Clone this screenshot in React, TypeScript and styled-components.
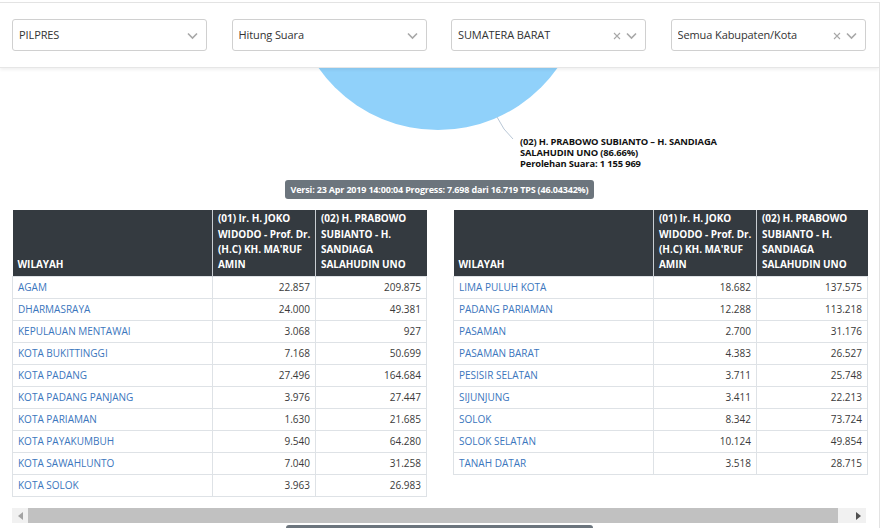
import React from 'react'
import styled, { createGlobalStyle } from 'styled-components'

const GlobalStyle = createGlobalStyle`
  html, body {
    margin: 0;
    padding: 0;
    background: #fff;
    overflow: hidden;
  }
  body {
    font-family: "Open Sans", "Noto Sans", sans-serif;
    color: #333;
  }
`

const Frame = styled.div`
  width: 880px;
  margin-top: 2px;
  border-top: 1px solid #e3e3e3;
  border-right: 1px solid #e3e3e3;
  box-sizing: border-box;
  height: 526px;
  overflow: hidden;
`

const FilterBar = styled.div`
  display: grid;
  grid-template-columns: repeat(4, 195px);
  column-gap: 24.5px;
  padding: 16px 12px 16px 12px;
  border-bottom: 1px solid #e6e6e6;
  box-shadow: 0 2px 3px rgba(0, 0, 0, 0.06);
  position: relative;
  z-index: 2;
  background: #fff;
`

const Select = styled.div`
  height: 32px;
  box-sizing: border-box;
  border: 1px solid #d0d0d0;
  border-radius: 3px;
  display: flex;
  align-items: center;
  padding: 0 8px 1px 6px;
  font-size: 11px;
  color: #333;
  letter-spacing: -0.1px;
`

const SelectText = styled.span`
  flex: 1;
  white-space: nowrap;
  overflow: hidden;
`

const SelectIcons = styled.span`
  display: flex;
  align-items: center;
  gap: 5px;
  padding-top: 2px;
`

const Chevron = () => (
  <svg width="11" height="8" viewBox="0 0 11 8">
    <path d="M1 1.5 L5.5 6 L10 1.5" fill="none" stroke="#a8a8a8" strokeWidth="1.6" />
  </svg>
)

const Cross = () => (
  <svg width="8" height="8" viewBox="0 0 8 8">
    <path d="M1 1 L7 7 M7 1 L1 7" fill="none" stroke="#a8a8a8" strokeWidth="1.1" />
  </svg>
)

const ChartArea = styled.div`
  position: relative;
  height: 112px;
`

const PieLabel = styled.div`
  position: absolute;
  left: 520px;
  top: 68px;
  font-size: 9.4px;
  font-weight: 700;
  line-height: 11px;
  color: #111;
  letter-spacing: -0.15px;
  white-space: nowrap;
`

const BadgeRow = styled.div`
  display: flex;
  justify-content: center;
  height: 30px;
`

const Badge = styled.div`
  background: #6c757d;
  color: #fff;
  border-radius: 3px;
  height: 19px;
  box-sizing: border-box;
  padding: 0 6px;
  display: flex;
  align-items: center;
  font-size: 9px;
  font-weight: 700;
  letter-spacing: -0.18px;
  white-space: nowrap;
`

const Tables = styled.div`
  display: flex;
  gap: 26px;
  padding: 0 0 0 12px;
  align-items: flex-start;
  height: 298px;
`

const Table = styled.table`
  width: 414px;
  border-collapse: collapse;
  table-layout: fixed;
  font-size: 10px;
`

const Th = styled.th`
  background: #343a40;
  color: #fff;
  font-weight: 700;
  text-align: left;
  vertical-align: bottom;
  padding: 0 2px 3px 5px;
  height: 66px;
  box-sizing: border-box;
  line-height: 15.3px;
  letter-spacing: -0.05px;
  border-left: 1px solid #c8cdd2;
  &:first-child {
    border-left: none;
  }
`

const Td = styled.td<{ $num?: boolean }>`
  height: 22px;
  box-sizing: border-box;
  padding: 0 5px;
  border: 1px solid #dee2e6;
  text-align: ${({ $num }) => ($num ? 'right' : 'left')};
  color: ${({ $num }) => ($num ? '#3a3a3a' : '#3b76bd')};
  white-space: nowrap;
  overflow: hidden;
`

const ScrollBar = styled.div`
  margin: 0 0 0 12px;
  width: 854px;
  height: 15px;
  background: #f1f1f1;
  display: flex;
  align-items: center;
`

const Arrow = styled.div`
  width: 16px;
  display: flex;
  justify-content: center;
  align-items: center;
`

const Thumb = styled.div`
  flex: 1;
  height: 15px;
  background: #c1c1c1;
  margin-right: 12px;
`

const SecondBadge = styled(Badge)`
  margin: 2px auto 0;
  width: 307px;
`

type Row = [string, string, string]

const left: Row[] = [
  ['AGAM', '22.857', '209.875'],
  ['DHARMASRAYA', '24.000', '49.381'],
  ['KEPULAUAN MENTAWAI', '3.068', '927'],
  ['KOTA BUKITTINGGI', '7.168', '50.699'],
  ['KOTA PADANG', '27.496', '164.684'],
  ['KOTA PADANG PANJANG', '3.976', '27.447'],
  ['KOTA PARIAMAN', '1.630', '21.685'],
  ['KOTA PAYAKUMBUH', '9.540', '64.280'],
  ['KOTA SAWAHLUNTO', '7.040', '31.258'],
  ['KOTA SOLOK', '3.963', '26.983'],
]

const right: Row[] = [
  ['LIMA PULUH KOTA', '18.682', '137.575'],
  ['PADANG PARIAMAN', '12.288', '113.218'],
  ['PASAMAN', '2.700', '31.176'],
  ['PASAMAN BARAT', '4.383', '26.527'],
  ['PESISIR SELATAN', '3.711', '25.748'],
  ['SIJUNJUNG', '3.411', '22.213'],
  ['SOLOK', '8.342', '73.724'],
  ['SOLOK SELATAN', '10.124', '49.854'],
  ['TANAH DATAR', '3.518', '28.715'],
]

const ResultTable = ({ rows }: { rows: Row[] }) => (
  <Table>
    <colgroup>
      <col style={{ width: 200 }} />
      <col style={{ width: 103 }} />
      <col style={{ width: 111 }} />
    </colgroup>
    <thead>
      <tr>
        <Th>WILAYAH</Th>
        <Th>
          (01) Ir. H. JOKO
          <br />
          WIDODO - Prof. Dr.
          <br />
          (H.C) KH. MA'RUF
          <br />
          AMIN
        </Th>
        <Th>
          (02) H. PRABOWO
          <br />
          SUBIANTO - H.
          <br />
          SANDIAGA
          <br />
          SALAHUDIN UNO
        </Th>
      </tr>
    </thead>
    <tbody>
      {rows.map(([name, a, b]) => (
        <tr key={name}>
          <Td>{name}</Td>
          <Td $num>{a}</Td>
          <Td $num>{b}</Td>
        </tr>
      ))}
    </tbody>
  </Table>
)

const filters = [
  { label: 'PILPRES', clear: false },
  { label: 'Hitung Suara', clear: false },
  { label: 'SUMATERA BARAT', clear: true },
  { label: 'Semua Kabupaten/Kota', clear: true },
]

export default function App() {
  return (
    <>
      <GlobalStyle />
      <Frame>
        <FilterBar>
          {filters.map(f => (
            <Select key={f.label}>
              <SelectText>{f.label}</SelectText>
              <SelectIcons>
                {f.clear && <Cross />}
                <Chevron />
              </SelectIcons>
            </Select>
          ))}
        </FilterBar>
        <ChartArea>
          <svg width="880" height="112" style={{ display: 'block' }}>
            <circle cx="438" cy="-84" r="146" fill="#90d1fa" />
            <path d="M497 49 Q503 62 513 71" fill="none" stroke="#b9c7d6" strokeWidth="1" />
          </svg>
          <PieLabel>
            (02) H. PRABOWO SUBIANTO – H. SANDIAGA
            <br />
            SALAHUDIN UNO (86.66%)
            <br />
            Perolehan Suara: 1 155 969
          </PieLabel>
        </ChartArea>
        <BadgeRow>
          <Badge>Versi: 23 Apr 2019 14:00:04 Progress: 7.698 dari 16.719 TPS (46.04342%)</Badge>
        </BadgeRow>
        <Tables>
          <ResultTable rows={left} />
          <ResultTable rows={right} />
        </Tables>
        <ScrollBar>
          <Arrow>
            <svg width="5" height="8" viewBox="0 0 5 8">
              <path d="M5 0 L0 4 L5 8 Z" fill="#a3a3a3" />
            </svg>
          </Arrow>
          <Thumb />
          <Arrow>
            <svg width="5" height="8" viewBox="0 0 5 8">
              <path d="M0 0 L5 4 L0 8 Z" fill="#505050" />
            </svg>
          </Arrow>
        </ScrollBar>
        <SecondBadge />
      </Frame>
    </>
  )
}
